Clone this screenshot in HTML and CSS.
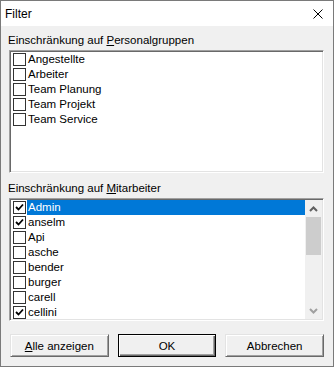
FILE: index.html
```html
<!DOCTYPE html>
<html lang="de">
<head>
<meta charset="utf-8">
<title>Filter</title>
<link rel="stylesheet" href="styles.css">
</head>
<body>
<div class="window">
  <div class="titlebar">
    <span class="title">Filter</span>
    <svg class="close" width="10" height="10" viewBox="0 0 10 10"><path d="M0.5 0.5 L9.5 9.5 M9.5 0.5 L0.5 9.5" stroke="#000" stroke-width="1" fill="none"/></svg>
  </div>
  <div class="content">
    <div class="label">Einschränkung auf <u>P</u>ersonalgruppen</div>
    <div class="list">
      <div class="rows">
        <div class="row"><span class="cb"></span><span class="txt">Angestellte</span></div>
        <div class="row"><span class="cb"></span><span class="txt">Arbeiter</span></div>
        <div class="row"><span class="cb"></span><span class="txt">Team Planung</span></div>
        <div class="row"><span class="cb"></span><span class="txt">Team Projekt</span></div>
        <div class="row"><span class="cb"></span><span class="txt">Team Service</span></div>
      </div>
    </div>
    <div class="label label2">Einschränkung auf <u>M</u>itarbeiter</div>
    <div class="list">
      <div class="rows">
        <div class="row selected"><span class="cb checked focus"><svg width="11" height="11" viewBox="0 0 11 11"><path d="M2 5 L4.5 7.5 L9 2.5" stroke="#000" stroke-width="1.8" fill="none"/></svg></span><span class="txt">Admin</span></div>
        <div class="row"><span class="cb checked"><svg width="11" height="11" viewBox="0 0 11 11"><path d="M2 5 L4.5 7.5 L9 2.5" stroke="#000" stroke-width="1.8" fill="none"/></svg></span><span class="txt">anselm</span></div>
        <div class="row"><span class="cb"></span><span class="txt">Api</span></div>
        <div class="row"><span class="cb"></span><span class="txt">asche</span></div>
        <div class="row"><span class="cb"></span><span class="txt">bender</span></div>
        <div class="row"><span class="cb"></span><span class="txt">burger</span></div>
        <div class="row"><span class="cb"></span><span class="txt">carell</span></div>
        <div class="row"><span class="cb checked"><svg width="11" height="11" viewBox="0 0 11 11"><path d="M2 5 L4.5 7.5 L9 2.5" stroke="#000" stroke-width="1.8" fill="none"/></svg></span><span class="txt">cellini</span></div>
      </div>
      <div class="scrollbar">
        <div class="sb-btn"><svg width="9" height="6" viewBox="0 0 9 6"><path d="M1 5 L4.5 1.5 L8 5" stroke="#606060" stroke-width="2" fill="none"/></svg></div>
        <div class="thumb"></div>
        <div class="sb-space"></div>
        <div class="sb-btn"><svg width="9" height="6" viewBox="0 0 9 6"><path d="M1 1 L4.5 4.5 L8 1" stroke="#a0a0a0" stroke-width="2" fill="none"/></svg></div>
      </div>
    </div>
    <div class="buttons">
      <div class="btn"><span><u>A</u>lle anzeigen</span></div>
      <div class="btn default"><span>OK</span></div>
      <div class="btn"><span>Abbrechen</span></div>
    </div>
  </div>
</div>
</body>
</html>
```
FILE: styles.css
```css
html, body {
  margin: 0;
  padding: 0;
  background: #f0f0f0;
}
body {
  font-family: "Liberation Sans", Arial, sans-serif;
  font-size: 11.5px;
  color: #000;
}
.window {
  width: 334px;
  height: 367px;
  box-sizing: border-box;
  border: 1px solid #7a7a7a;
  background: #f0f0f0;
  display: flex;
  flex-direction: column;
}
.titlebar {
  height: 25px;
  background: #fff;
  display: flex;
  align-items: center;
  justify-content: space-between;
  padding: 0 10px 0 4px;
  font-size: 12px;
}
.close {
  display: block;
}
.content {
  padding: 7px 9px 0 8px;
  display: flex;
  flex-direction: column;
}
.label {
  height: 15px;
  line-height: 15px;
  margin-bottom: 2px;
  margin-left: -1px;
}
.label2 {
  margin-top: 8px;
}
.list {
  height: 123px;
  box-sizing: border-box;
  border: 1px solid;
  border-color: #a0a0a0 #fff #fff #a0a0a0;
  box-shadow: inset 1px 1px #696969, inset -1px -1px #e3e3e3;
  background: #fff;
  padding: 1px;
  display: flex;
  overflow: hidden;
}
.rows {
  flex: 1;
  display: flex;
  flex-direction: column;
  padding-left: 2px;
  overflow: hidden;
}
.row {
  height: 15px;
  flex: none;
  display: flex;
  align-items: center;
}
.cb {
  width: 13px;
  height: 13px;
  box-sizing: border-box;
  border: 1px solid #333;
  background: #fff;
  flex: none;
  display: flex;
  align-items: center;
  justify-content: center;
}
.cb svg {
  display: block;
}
.txt {
  flex: 1;
  height: 15px;
  line-height: 15px;
  margin-left: 1px;
  padding-left: 1px;
}
.selected .txt {
  background: #0078d7;
  color: #fff;
}
.scrollbar {
  width: 17px;
  flex: none;
  background: #f0f0f0;
  display: flex;
  flex-direction: column;
}
.sb-btn {
  height: 17px;
  flex: none;
  display: flex;
  align-items: center;
  justify-content: center;
}
.thumb {
  height: 38px;
  margin: 0 1px;
  background: #cdcdcd;
  flex: none;
}
.sb-space {
  flex: 1;
}
.buttons {
  margin-top: 13px;
  display: grid;
  grid-template-columns: repeat(3, 1fr);
  column-gap: 9px;
  margin-left: 1px;
}
.btn {
  height: 23px;
  box-sizing: border-box;
  border: 1px solid;
  border-color: #e3e3e3 #696969 #696969 #e3e3e3;
  box-shadow: inset 1px 1px #fff, inset -1px -1px #a0a0a0;
  background: #f0f0f0;
  display: flex;
  align-items: center;
  justify-content: center;
}
.btn.default {
  border-color: #000;
  box-shadow: inset 1px 1px #fff, inset -1px -1px #696969, inset -2px -2px #a0a0a0;
}
```
